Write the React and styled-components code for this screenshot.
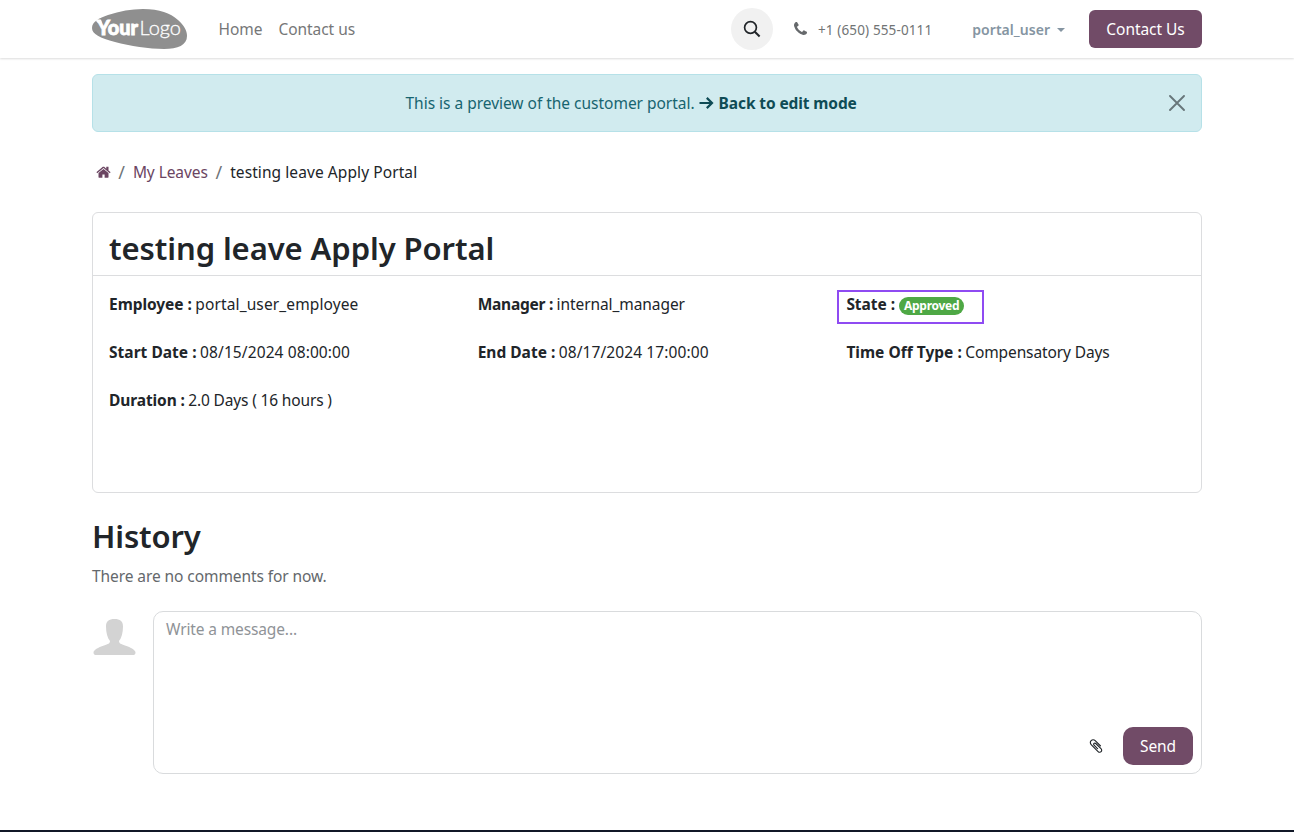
import React from "react";
import styled, { createGlobalStyle } from "styled-components";

const GlobalStyle = createGlobalStyle`
  *, *::before, *::after { box-sizing: border-box; }
  body {
    margin: 0;
    background: #fff;
    color: #212529;
    font: 400 15.5px/24px "Noto Sans", "Open Sans", sans-serif;
    overflow: hidden;
  }
  h1, h2, p { margin: 0; }
  a { color: inherit; text-decoration: none; }
  button { font: inherit; border: 0; cursor: pointer; }
`;

const Page = styled.div`
  height: 832px;
  display: flex;
  flex-direction: column;
`;

const Container = styled.div`
  width: 1110px;
  margin: 0 auto;
`;

const Text = styled.span`
  letter-spacing: ${(p) => p.$ls || 0}px;
  white-space: nowrap;
`;

const Header = styled.header`
  flex: none;
  height: 58px;
  box-shadow: 0 1px 2px rgba(0, 0, 0, 0.14);
`;

const Navbar = styled(Container)`
  height: 58px;
  display: flex;
  align-items: center;
  justify-content: space-between;
`;

const NavGroup = styled.nav`
  display: flex;
  align-items: center;
  color: #767778;
`;

const NavLink = styled.a`
  margin-right: 16px;
`;

const Logo = styled.svg`
  width: 95px;
  height: 40px;
  margin-right: 31.4px;
`;

const SearchButton = styled.button`
  width: 42px;
  height: 42px;
  padding: 0;
  border-radius: 50%;
  background: #f1f1f1;
  display: grid;
  place-items: center;
`;

const Phone = styled.div`
  display: flex;
  align-items: center;
  gap: 11px;
  margin-left: 21px;
  font-size: 13.5px;
  color: #717475;

  svg { margin-top: -1px; }
  span { margin-top: 2px; }
`;

const UserMenu = styled.div`
  display: flex;
  align-items: center;
  gap: 7px;
  margin: 1px 24px 0 40px;
  font-size: 14px;
  font-weight: 600;
  color: #8595a2;
`;

const Caret = styled.i`
  border: 4px solid transparent;
  border-top-color: currentColor;
  border-bottom: 0;
`;

const PrimaryButton = styled.button`
  width: ${(p) => p.$w}px;
  height: 38px;
  padding: 0;
  border-radius: ${(p) => p.$r}px;
  background: #714b67;
  color: #fff;
`;

const Main = styled(Container).attrs({ as: "main" })`
  flex: 1;
  display: flex;
  flex-direction: column;
  padding-top: 16px;
`;

const Alert = styled.div`
  height: 58px;
  display: flex;
  align-items: center;
  padding: 0 16px 0 312.5px;
  border: 1px solid #b6e1e8;
  border-radius: 6px;
  background: #d1ebef;
  color: #176470;
`;

const AlertLink = styled.a`
  display: flex;
  align-items: center;
  gap: 4.5px;
  margin-left: 4.5px;
  font-weight: 700;
  color: #0f4b55;
`;

const CloseIcon = styled.svg`
  width: 16px;
  height: 16px;
  margin-left: auto;
`;

const Breadcrumb = styled.nav`
  display: flex;
  align-items: center;
  height: 24px;
  margin-top: 28px;
  padding-left: 3.5px;
`;

const Crumb = styled.a`
  display: flex;
  color: #6b4562;
`;

const Slash = styled.span`
  width: 22.4px;
  text-align: center;
  font-size: 18px;
  color: #6f7478;
`;

const Card = styled.section`
  height: 281px;
  margin-top: 28px;
  border: 1px solid #dcdddf;
  border-radius: 6px;
`;

const CardHeader = styled.div`
  height: 63px;
  padding: 16px 16px 0;
  border-bottom: 1px solid #dcdddf;
`;

const Title = styled.h1`
  font-size: 31px;
  line-height: 38px;
  font-weight: 600;
`;

const Fields = styled.div`
  display: grid;
  grid-template-columns: 368.7px 368.7px 1fr;
  grid-auto-rows: 24px;
  row-gap: 24px;
  padding: 16px;
`;

const FieldRow = styled.div`
  position: relative;
  display: flex;
  align-items: center;
`;

const Label = styled.b`
  margin-right: 3.5px;
  letter-spacing: ${(p) => p.$ls || 0}px;
  white-space: nowrap;
`;

const Badge = styled.span`
  width: 65px;
  height: 18px;
  margin: 3px 0 0 0.7px;
  border-radius: 9px;
  background: #4ea845;
  color: #fff;
  font-size: 12px;
  line-height: 17px;
  font-weight: 700;
  letter-spacing: -0.27px;
  text-align: center;
`;

const Highlight = styled.span`
  position: absolute;
  left: -9.4px;
  top: -2px;
  width: 147px;
  height: 34px;
  border: 2px solid #8f4bf2;
`;

const HistoryTitle = styled(Title).attrs({ as: "h2" })`
  margin-top: 24px;
`;

const Empty = styled.p`
  margin-top: 9px;
  color: #64686c;
`;

const Composer = styled.div`
  display: flex;
  justify-content: space-between;
  margin-top: 23px;
`;

const Avatar = styled.svg`
  width: 45px;
  height: 45px;
`;

const MessageBox = styled.div`
  width: 1049px;
  height: 163px;
  display: flex;
  flex-direction: column;
  justify-content: space-between;
  padding: 5px 8px 8px 12px;
  border: 1px solid #d9dbdd;
  border-radius: 10px;
  color: #8f9397;
`;

const Actions = styled.div`
  display: flex;
  align-items: center;
  justify-content: flex-end;
  gap: 19px;
`;

const Footer = styled.footer`
  flex: none;
  height: 2px;
  background: #111827;
`;

const fields = [
  { label: "Employee :", ls: -0.053, value: "portal_user_employee", vls: 0.12 },
  { label: "Manager :", ls: -0.25, value: "internal_manager", vls: -0.081 },
  { label: "State :", ls: -0.05, badge: "Approved" },
  { label: "Start Date :", ls: 0.03, value: "08/15/2024 08:00:00", vls: 0.1 },
  { label: "End Date :", ls: 0, value: "08/17/2024 17:00:00", vls: 0.1 },
  { label: "Time Off Type :", ls: 0.015, value: "Compensatory Days", vls: -0.117 },
  { label: "Duration :", ls: -0.1, value: "2.0 Days ( 16 hours )", vls: -0.16 },
];

function Field({ label, ls, value, vls, badge }) {
  return (
    <FieldRow>
      <Label $ls={ls}>{label}</Label>
      {badge ? <Badge>{badge}</Badge> : <Text $ls={vls}>{value}</Text>}
      {badge && <Highlight />}
    </FieldRow>
  );
}

export default function App() {
  return (
    <Page>
      <GlobalStyle />
      <Header>
        <Navbar>
          <NavGroup>
            <Logo viewBox="0 0 95 40">
              <path
                d="M0 19C0 13 7 9 16 6C28 2 39 0 51 0C68 0 78 4 86 11C92 16 95 22 95 27C95 36 86 40 72 40C57 40 38 37 23 33C8 29 0 25 0 19Z"
                fill="#8f8f8f"
              />
              <path d="M3.500 11.500L9 10.500L10 14.500L6 14Z" fill="#fff" />
              <text x="5" y="26" textLength="41" fontFamily="Lato" fontWeight="900" fontSize="20" fill="#fff" stroke="#fff" strokeWidth="0.8" lengthAdjust="spacingAndGlyphs">Your</text>
              <text x="47.5" y="26" textLength="41.5" fontFamily="Lato" fontWeight="300" fontSize="20.5" fill="#fff" stroke="#fff" strokeWidth="0.3" lengthAdjust="spacingAndGlyphs">Logo</text>
            </Logo>
            <NavLink href="#"><Text $ls={0}>Home</Text></NavLink>
            <NavLink href="#"><Text $ls={-0.06}>Contact us</Text></NavLink>
          </NavGroup>
          <NavGroup>
            <SearchButton aria-label="Search">
              <svg width="18" height="18" viewBox="0 0 18 18" fill="none" stroke="#212529">
                <circle cx="7.5" cy="7.5" r="5.9" strokeWidth="1.7" />
                <path d="M11.8 11.8L16.6 16.4" strokeWidth="2.1" />
              </svg>
            </SearchButton>
            <Phone>
              <svg width="13" height="13" viewBox="0 128 1408 1408" fill="#66696c">
                <path d="M1408 1240q0 27-10 70.500t-21 68.500q-21 50-122 106-94 51-186 51-27 0-53-3.500t-57.500-12.500-47-14.500-55.500-20.500-49-18q-98-35-175-83-127-79-264-216t-216-264q-48-77-83-175-3-9-18-49t-20.500-55.500-14.500-47-12.500-57.500-3.500-53q0-92 51-186 56-101 106-122 25-11 68.500-21t70.500-10q14 0 21 3 18 6 53 76 11 19 30 54t35 63.500 31 53.500q3 4 17.500 25t21.500 35.500 7 28.500q0 20-28.500 50t-62 55-62 53-28.500 46q0 9 5 22.500t8.500 20.500 14 24 11.500 19q76 137 174 235t235 174q2 1 19 11.500t24 14 20.500 8.500 22.500 5q18 0 46-28.500t53-62 55-62 50-28.500q14 0 28.500 7t35.500 21.500 25 17.500q25 15 53.500 31t63.500 35 54 30q70 35 76 53 3 7 3 21z" />
              </svg>
              <Text $ls={0.13}>+1 (650) 555-0111</Text>
            </Phone>
            <UserMenu>
              <Text $ls={0.03}>portal_user</Text>
              <Caret />
            </UserMenu>
            <PrimaryButton $w={113} $r={6}><Text $ls={-0.05}>Contact Us</Text></PrimaryButton>
          </NavGroup>
        </Navbar>
      </Header>

      <Main>
        <Alert>
          <Text $ls={-0.02}>This is a preview of the customer portal.</Text>
          <AlertLink href="#">
            <svg width="15" height="14" viewBox="0 0 15 14" fill="none" stroke="currentColor" strokeWidth="2.2">
              <path d="M0.500 7H13M7.800 1.900L13 7L7.800 12.100" />
            </svg>
            <Text $ls={-0.107}>Back to edit mode</Text>
          </AlertLink>
          <CloseIcon viewBox="0 0 16 16" stroke="#68767a" strokeWidth="1.9" strokeLinecap="round">
            <path d="M1 1L15 15M15 1L1 15" />
          </CloseIcon>
        </Alert>

        <Breadcrumb>
          <Crumb href="#" aria-label="Home">
            <svg width="15" height="15" viewBox="30 64 1730 1730" fill="currentColor">
              <path d="M1472 992v480q0 26-19 45t-45 19h-384v-384h-256v384h-384q-26 0-45-19t-19-45v-480q0-1 .5-3t.5-3l575-474 575 474q1 2 1 6zm223-69l-62 74q-8 9-21 11h-3q-13 0-21-7l-692-577-692 577q-12 8-24 7-13-2-21-11l-62-74q-8-10-7-23.500t11-21.500l719-599q32-26 76-26t76 26l244 204v-195q0-14 9-23t23-9h192q14 0 23 9t9 23v408l219 182q10 8 11 21.500t-7 23.500z" />
            </svg>
          </Crumb>
          <Slash>/</Slash>
          <Crumb href="#"><Text $ls={-0.084}>My Leaves</Text></Crumb>
          <Slash>/</Slash>
          <Text $ls={0.083}>testing leave Apply Portal</Text>
        </Breadcrumb>

        <Card>
          <CardHeader>
            <Title><Text $ls={-0.085}>testing leave Apply Portal</Text></Title>
          </CardHeader>
          <Fields>
            {fields.map((f) => <Field key={f.label} {...f} />)}
          </Fields>
        </Card>

        <HistoryTitle><Text $ls={-0.15}>History</Text></HistoryTitle>
        <Empty><Text $ls={-0.08}>There are no comments for now.</Text></Empty>

        <Composer>
          <Avatar viewBox="0 0 45 45" fill="#d3d3d3">
            <path d="M22.500 8C28 8 31 10 31 15.500C31 22 29.500 27 27 30C27 32.500 29 33 33 34.500C39 36.500 43.500 39 43.500 41.500C43.500 43.500 42.500 44 40.500 44H4.500C2.500 44 1.500 43.500 1.500 41.500C1.500 39 6 36.500 12 34.500C16 33 18 32.500 18 30C15.500 27 14 22 14 15.500C14 10 17 8 22.500 8Z" />
          </Avatar>
          <MessageBox>
            <Text $ls={-0.13}>Write a message...</Text>
            <Actions>
              <svg width="16" height="16" viewBox="0 0 1792 1792" fill="#212529">
                <path d="M1596 1385q0 117-79 196t-196 79q-135 0-235-100l-777-776q-113-115-113-271 0-159 110-270t269-111q158 0 273 113l605 606q10 10 10 22 0 16-30.500 46.500t-46.500 30.500q-13 0-23-10l-606-607q-79-77-181-77-106 0-179 75t-73 181q0 105 76 181l776 777q63 63 145 63 64 0 106-42t42-106q0-82-63-145l-581-581q-26-24-60-24-29 0-48 19t-19 48q0 32 25 59l410 410q10 10 10 22 0 16-31 47t-47 31q-12 0-22-10l-410-410q-63-61-63-149 0-82 57-139t139-57q88 0 149 63l581 581q100 98 100 235z" />
              </svg>
              <PrimaryButton $w={70} $r={10}><Text $ls={-0.11}>Send</Text></PrimaryButton>
            </Actions>
          </MessageBox>
        </Composer>
      </Main>
      <Footer />
    </Page>
  );
}
